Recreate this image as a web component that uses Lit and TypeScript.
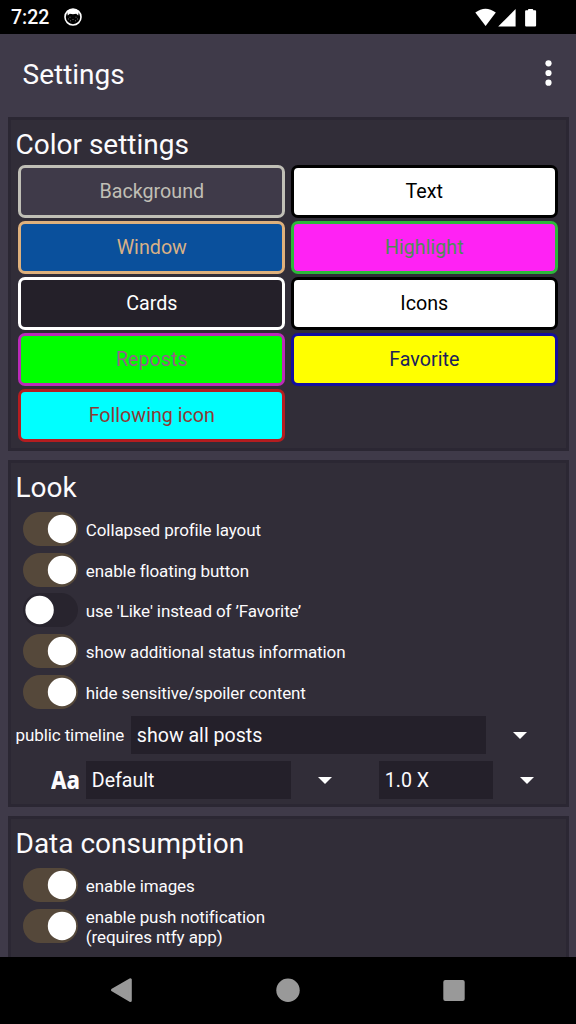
import { LitElement, html, css, svg } from "lit";
import { customElement, property } from "lit/decorators.js";

@customElement("toggle-row")
class ToggleRow extends LitElement {
  @property({ type: Boolean }) on = false;

  static styles = css`
    :host { display: flex; align-items: center; height: 40.75px; padding-left: 7.3px; }
    .track { display: block; width: 55px; height: 34px; flex: none; margin-right: 8px; }
    .label { font-size: 17px; line-height: 20px; padding-top: 1.8px; letter-spacing: -0.1px; }
  `;

  render() {
    return html`
      <svg class="track" viewBox="0 0 55 34">
        <rect width="55" height="34" rx="17" fill=${this.on ? "#55483a" : "#28242e"} />
        <circle cx=${this.on ? 39 : 16.6} cy="17" r="14.2" fill="#fff" />
      </svg>
      <span class="label"><slot></slot></span>
    `;
  }
}

const arrow = html`<svg class="arrow" viewBox="0 0 14 7"><path d="M0 0H14L7 7Z" fill="#fff" /></svg>`;

@customElement("app-root")
class AppRoot extends LitElement {
  static styles = css`
    :host {
      display: flex; flex-direction: column; height: 1024px; overflow: hidden;
      background: #3f3a49; color: #fcfbfd; font-family: Roboto, sans-serif;
    }
    svg { display: block; flex: none; }
    .status {
      height: 33.5px; flex: none; background: #000; display: flex; align-items: center;
      padding: 1px 39px 0 11px; box-sizing: border-box;
    }
    .clock { font-size: 19.5px; font-weight: 500; line-height: 32px; width: 53px; padding-top: 1px; }
    .signals { margin-left: auto; }
    .bar {
      height: 83px; flex: none; box-sizing: border-box; display: flex; align-items: center;
      justify-content: space-between; padding: 0 24.5px 4px 22.5px;
    }
    .bar-title { font-size: 28px; line-height: 34px; padding-top: 3px; }
    .content { flex: 1; min-height: 0; overflow: hidden; padding: 0 7px 0 7.5px; }
    .card {
      box-sizing: border-box; border: 3px solid #2b2733; background: #312d38;
      margin-bottom: 9px; padding: 0 5px;
    }
    .colors-card { height: 334.5px; }
    .look-card { height: 347px; }
    .data-card { height: 200px; }
    .heading { font-size: 28px; line-height: 34px; font-weight: 400; margin: 0; padding-top: 8px; height: 37.5px; }
    .grid { display: grid; grid-template-columns: 267px 267px; gap: 3px 5.5px; padding-left: 2.8px; }
    .swatch {
      box-sizing: border-box; height: 53px; border: 3px solid; border-radius: 7px;
      display: flex; align-items: center; justify-content: center; font-size: 19.7px;
    }
    .name { padding-bottom: 1px; }
    .background { background: #3f3a49; color: #c0bfb6; }
    .text, .icons { background: #fff; color: #000; }
    .window { background: #0a509c; color: #deb07c; }
    .window .name { color: #d8b186; }
    .highlight { background: #ff22f4; color: #2cb83a; }
    .highlight .name { color: #4f8c58; }
    .cards { background: #242029; color: #fff; }
    .reposts { background: #0f0; color: #bb2ab9; }
    .reposts .name { color: #94608a; }
    .favorite { background: #ff0; color: #120e9f; }
    .favorite .name { color: #201e5c; }
    .following { background: #0ff; color: #b41d20; }
    .following .name { color: #8c3a36; }
    .line { display: flex; align-items: center; height: 38px; }
    .timeline { margin-top: 4px; }
    .fonts { margin-top: 7px; padding-left: 35px; }
    .caption { font-size: 17px; width: 115.5px; letter-spacing: -0.1px; }
    .field {
      box-sizing: border-box; height: 38px; background: #24202a; font-size: 19.6px;
      line-height: 39px; padding-left: 5.8px;
    }
    .wide { width: 355px; margin-right: 26.5px; }
    .font-name { width: 205px; margin-right: 26.5px; }
    .scale { width: 114px; margin: 0 27px 0 47.5px; }
    .arrow { width: 14px; height: 7px; }
    .aa { width: 35.5px; font-family: "Noto Sans", sans-serif; font-weight: 800; font-size: 25px; line-height: 36px; height: 38px; }
    .aa-glyphs { display: inline-block; transform: scaleX(0.88); transform-origin: left; }
    .nav { height: 67px; flex: none; background: #000; }
  `;

  private swatches = [
    ["background", "Background"], ["text", "Text"],
    ["window", "Window"], ["highlight", "Highlight"],
    ["cards", "Cards"], ["icons", "Icons"],
    ["reposts", "Reposts"], ["favorite", "Favorite"],
    ["following", "Following icon"],
  ];

  render() {
    return html`
      <header class="status">
        <span class="clock">7:22</span>
        <svg width="18" height="18" viewBox="0 0 18 18">
          <circle cx="9" cy="9" r="8" fill="#000" stroke="#fff" stroke-width="1.6" />
          <path d="M3 3Q9-1 15 3L14.2 7.6L12.2 5.8Q9 6.6 5.8 5.8L3.8 7.6Z" fill="#fff" />
          <path d="M5.5 9.2h1M11.5 9.2h1M8.5 11.5h1M4 11h1M13 11h1M6 12.8h1M11 12.8h1" stroke="#999" stroke-width=".7" />
        </svg>
        <svg class="signals" width="62" height="19" viewBox="0 0 62 19">
          <path d="M0.3 4.5Q10.5-3.2 20.8 4.5L10.6 18Z" fill="#fff" />
          <path d="M23.2 18.5L40.6 1V18.5Z" fill="#fff" />
          <path d="M53 2.2V1.7Q53 .9 53.8 .9H57.4Q58.2 .9 58.2 1.7V2.2H60.1Q61.1 2.2 61.1 3.2V17.6Q61.1 18.6 60.1 18.6H51.1Q50.1 18.6 50.1 17.6V3.2Q50.1 2.2 51.1 2.2Z" fill="#fff" />
        </svg>
      </header>
      <div class="bar">
        <span class="bar-title">Settings</span>
        <svg width="7" height="28" viewBox="0 0 7 28">
          ${[4.3, 14, 23.7].map((y) => svg`<circle cx="3.5" cy=${y} r="3.1" fill="#fff" />`)}
        </svg>
      </div>
      <main class="content">
        <section class="card colors-card">
          <h2 class="heading">Color settings</h2>
          <div class="grid">
            ${this.swatches.map(([cls, name]) => html`<div class="swatch ${cls}"><span class="name">${name}</span></div>`)}
          </div>
        </section>
        <section class="card look-card">
          <h2 class="heading">Look</h2>
          <toggle-row on>Collapsed profile layout</toggle-row>
          <toggle-row on>enable floating button</toggle-row>
          <toggle-row>use 'Like' instead of ’Favorite’</toggle-row>
          <toggle-row on>show additional status information</toggle-row>
          <toggle-row on>hide sensitive/spoiler content</toggle-row>
          <div class="line timeline">
            <span class="caption">public timeline</span>
            <div class="field wide">show all posts</div>
            ${arrow}
          </div>
          <div class="line fonts">
            <span class="aa"><span class="aa-glyphs">Aa</span></span>
            <div class="field font-name">Default</div>
            ${arrow}
            <div class="field scale">1.0 X</div>
            ${arrow}
          </div>
        </section>
        <section class="card data-card">
          <h2 class="heading">Data consumption</h2>
          <toggle-row on>enable images</toggle-row>
          <toggle-row on>enable push notification<br />(requires ntfy app)</toggle-row>
        </section>
      </main>
      <svg class="nav" width="576" height="67" viewBox="0 957 576 67">
        <path d="M112.5 990L130.3 979.8V1000.4Z" fill="#999" stroke="#999" stroke-width="3" stroke-linejoin="round" />
        <circle cx="288" cy="990.3" r="11.7" fill="#999" />
        <rect x="443.3" y="980" width="21.4" height="21" rx="2" fill="#999" />
      </svg>
    `;
  }
}
